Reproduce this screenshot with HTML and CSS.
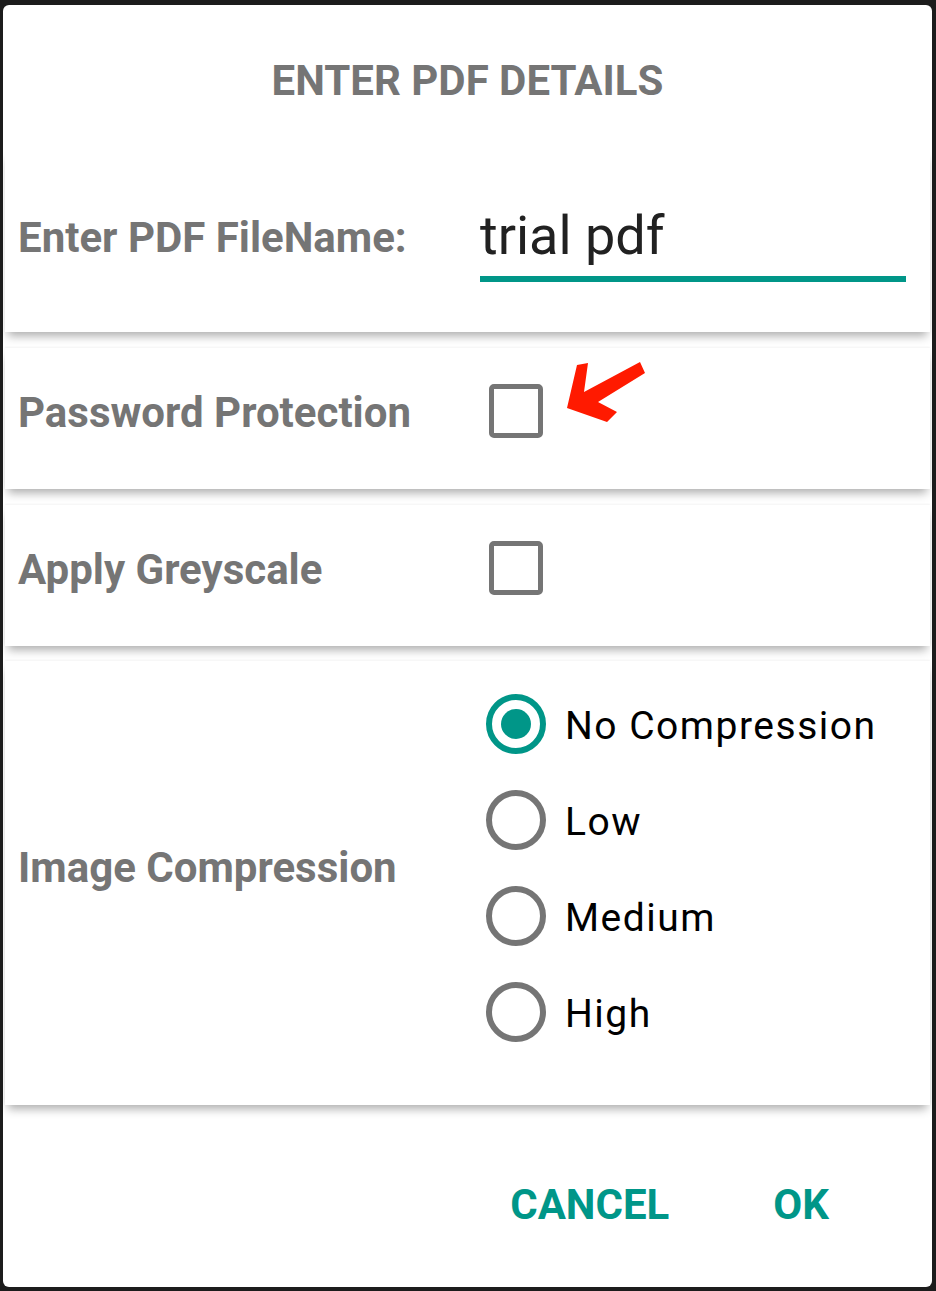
FILE: index.html
```html
<!DOCTYPE html>
<html>
<head>
<meta charset="utf-8">
<link rel="stylesheet" href="styles.css">
</head>
<body>
<div class="dialog">
  <div class="title">ENTER PDF DETAILS</div>
  <div class="card card-name">
    <div class="label">Enter PDF FileName:</div>
    <div class="input">trial pdf</div>
  </div>
  <div class="card card-check">
    <div class="label">Password Protection</div>
    <div class="check"></div>
    <svg class="arrow" width="90" height="75" viewBox="560 353 90 75">
      <polygon fill="#ff1a00" points="567,408 577,365 588,363 584,392 640,362 645,373 598,402 617,412 607,422"/>
    </svg>
  </div>
  <div class="card card-check">
    <div class="label">Apply Greyscale</div>
    <div class="check"></div>
  </div>
  <div class="card card-radio">
    <div class="label">Image Compression</div>
    <div class="radios">
      <div class="radio-item"><span class="radio on"></span><span class="rtext">No Compression</span></div>
      <div class="radio-item"><span class="radio"></span><span class="rtext">Low</span></div>
      <div class="radio-item"><span class="radio"></span><span class="rtext">Medium</span></div>
      <div class="radio-item"><span class="radio"></span><span class="rtext">High</span></div>
    </div>
  </div>
  <div class="buttons">
    <span class="btn btn-cancel">CANCEL</span>
    <span class="btn btn-ok">OK</span>
  </div>
</div>
</body>
</html>
```
FILE: styles.css
```css
html, body {
  margin: 0;
  padding: 0;
}
body {
  width: 936px;
  height: 1291px;
  background: #1c1c1c;
  font-family: Roboto, "Noto Sans", sans-serif;
  overflow: hidden;
  box-sizing: border-box;
  padding: 5px 4px 4px 3px;
}
.dialog {
  background: #fff;
  border-radius: 6px;
  height: 1282px;
  display: flex;
  flex-direction: column;
  overflow: hidden;
}
.title {
  height: 145px;
  box-sizing: border-box;
  padding-top: 52px;
  text-align: center;
  font-size: 42px;
  line-height: 48px;
  font-weight: 700;
  color: #757575;
}
.card {
  position: relative;
  background: #fff;
  margin: 0 2px;
  box-shadow: 0 7px 9px -3px rgba(0, 0, 0, 0.32), 0 -1px 2px rgba(0, 0, 0, 0.05);
  display: grid;
  grid-template-columns: 475px 1fr;
  box-sizing: border-box;
}
.label {
  font-size: 42px;
  line-height: 48px;
  font-weight: 700;
  color: #757575;
  padding-left: 13px;
}
.card-name {
  height: 182px;
  padding-top: 64px;
  align-items: start;
  box-shadow: 0 7px 9px -3px rgba(0, 0, 0, 0.32);
}
.input {
  margin-top: -8px;
  width: 426px;
  font-size: 54px;
  line-height: 60px;
  color: #212121;
  padding-bottom: 10px;
  border-bottom: 6px solid #009688;
}
.card-check {
  height: 141px;
  margin-top: 16px;
  padding-top: 36px;
  align-items: start;
}
.card-check .label {
  margin-top: 5px;
}
.check {
  margin-left: 9px;
  width: 54px;
  height: 54px;
  box-sizing: border-box;
  border: 5px solid #757575;
  border-radius: 5px;
}
.arrow {
  position: absolute;
  left: 555px;
  top: 5px;
}
.card-radio {
  height: 444px;
  margin-top: 15px;
  padding-top: 33px;
  padding-bottom: 63px;
  align-items: center;
}
.radios {
  display: flex;
  flex-direction: column;
  gap: 36px;
  padding-left: 6px;
}
.radio-item {
  display: flex;
  align-items: center;
  height: 60px;
  gap: 19px;
}
.radio {
  width: 60px;
  height: 60px;
  box-sizing: border-box;
  border: 6px solid #757575;
  border-radius: 50%;
  display: flex;
  align-items: center;
  justify-content: center;
  flex: none;
}
.radio.on {
  border-color: #009688;
}
.radio.on::after {
  content: "";
  width: 30px;
  height: 30px;
  border-radius: 50%;
  background: #009688;
}
.rtext {
  font-size: 39px;
  line-height: 48px;
  letter-spacing: 1.5px;
  color: #000;
  margin-top: 4px;
}
.buttons {
  display: flex;
  justify-content: flex-end;
  padding-top: 76px;
  padding-right: 103px;
  gap: 104px;
}
.btn {
  font-size: 42px;
  line-height: 48px;
  font-weight: 700;
  color: #009688;
}
```
